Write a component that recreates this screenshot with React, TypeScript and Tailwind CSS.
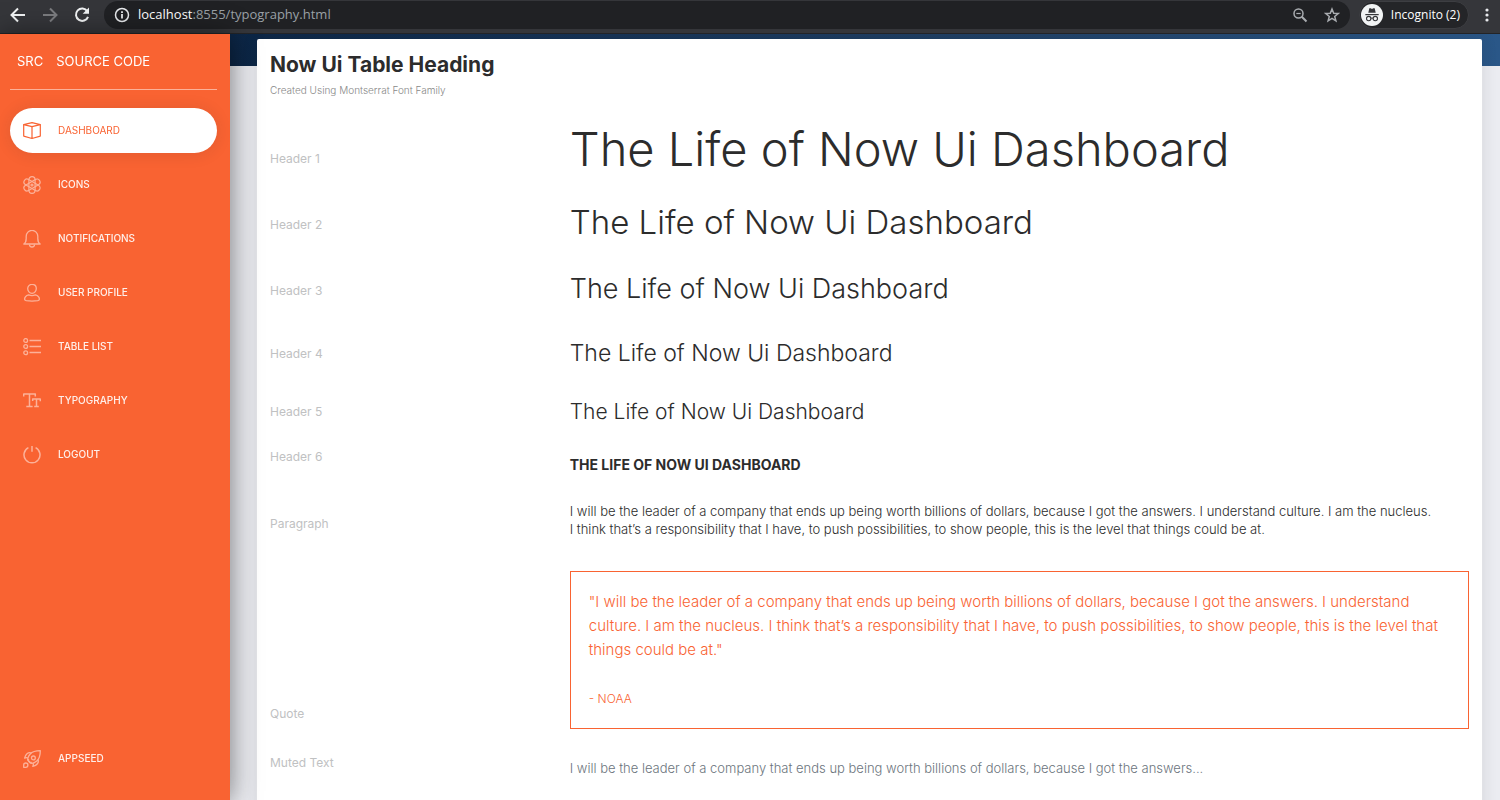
import type { ReactNode } from "react";

type NavItem = { label: string; icon: ReactNode };

const stroke = {
  viewBox: "0 0 18 18",
  fill: "none",
  stroke: "currentColor",
  strokeWidth: 1.3,
  strokeLinejoin: "round" as const,
  "aria-hidden": true,
};

const BoxIcon = (
  <svg {...stroke} strokeWidth={1.2} className="size-[18px]">
    <path d="M.7 2.600 9 4.700l8.300-2.100L9 .6Z" />
    <path d="M.7 2.600v11.500L9 16.500l8.300-2.400V2.600M9 4.700V16.500" />
  </svg>
);

const AtomIcon = (
  <svg {...stroke} strokeWidth={1.2} className="size-[18px]">
    <rect x="5.900" y=".6" width="6.200" height="16.800" rx="3.100" />
    <rect x="5.900" y=".2" width="6.200" height="17.600" rx="3.100" transform="rotate(60 9 9)" />
    <rect x="5.900" y=".2" width="6.200" height="17.600" rx="3.100" transform="rotate(120 9 9)" />
    <circle cx="9" cy="9" r="1" />
  </svg>
);

const BellIcon = (
  <svg {...stroke} className="size-[18px]">
    <path d="M.8 14c2-1.300 2.400-3 2.400-5.600V6.200a5.800 5.800 0 0 1 11.600 0v2.200c0 2.600.4 4.300 2.400 5.600Z" />
    <path d="M6.500 14.500a2.500 2.500 0 0 0 5 0" />
  </svg>
);

const UserIcon = (
  <svg {...stroke} className="size-[18px]">
    <path d="M9 .4c2.500 0 4.300 1.800 4.300 4.200S11.500 9.400 9 9.400 4.700 7 4.700 4.600 6.500.4 9 .4Z" />
    <path d="M5.600 10.900c-2.400.7-4 2.300-4 4.400 0 .9.700 1.100 1.600 1.300 3.600.6 8 .6 11.600 0 .9-.2 1.600-.4 1.600-1.300 0-2.100-1.600-3.700-4-4.400-2 .9-4.800.9-6.800 0Z" />
  </svg>
);

const ListIcon = (
  <svg {...stroke} className="size-[18px]">
    <circle cx="2.700" cy="2.500" r="1.900" />
    <circle cx="2.700" cy="8.500" r="1.900" />
    <circle cx="2.700" cy="14.800" r="1.900" />
    <path d="M6.500 2.500H18M6.500 8.500H18M6.500 14.500H18" />
  </svg>
);

const TypeIcon = (
  <svg {...stroke} strokeWidth={1.500} className="size-[18px]">
    <path d="M.7 4.500V2h11.600v2.500M6.500 2V14.500M3.300 14.500h6.300" />
    <path d="M9.700 9V7h7.600v2.200M13.500 7v7.500M11.200 14.500h4.600" />
  </svg>
);

const PowerIcon = (
  <svg {...stroke} strokeWidth={1.500} className="size-[18px]">
    <path d="M9 0v5.700M5.400 1.700a8 8 0 1 0 7.200 0" />
  </svg>
);

const RocketIcon = (
  <svg {...stroke} strokeWidth={1.300} className="size-[18px]">
    <path d="M17.300.7c-4.700 0-8 1-10.300 3.500-2 2.200-2.600 4.400-2.200 6.200l2.800 2.800c1.800.4 4-.2 6.200-2.200C16.300 8.700 17.300 5.400 17.300.7Z" />
    <circle cx="10.400" cy="7.900" r="1.900" />
    <path d="M8.500 3C5.200 1.800 2.700 4 1.600 8.200c1.200-.7 2.300-.7 3.400-.1M15 9.500c1.200 3.300-1 5.800-5.200 6.900.7-1.200.7-2.300.1-3.400M5.600 9.200c-.5 2 1.200 3.700 3.200 3.200" />
    <path d="M.7 17.300v-2.200c0-1.200.9-2.100 2.100-2.100s2.100.9 2.100 2.100-.9 2.200-2.100 2.200Z" />
  </svg>
);

const NAV: NavItem[] = [
  { label: "Dashboard", icon: BoxIcon },
  { label: "Icons", icon: AtomIcon },
  { label: "Notifications", icon: BellIcon },
  { label: "User Profile", icon: UserIcon },
  { label: "Table List", icon: ListIcon },
  { label: "Typography", icon: TypeIcon },
  { label: "Logout", icon: PowerIcon },
];

function NavLink({ item, active = false }: { item: NavItem; active?: boolean }) {
  return (
    <a
      href="#"
      aria-current={active ? "page" : undefined}
      className={
        active
          ? "flex h-[45px] items-center gap-[17px] rounded-full bg-white px-[13px] text-[#f96332] shadow-[0_1px_15px_1px_rgba(39,39,39,0.1)]"
          : "flex h-[45px] items-center gap-[17px] rounded-full px-[13px] text-white"
      }
    >
      <span className={active ? "" : "opacity-50"}>{item.icon}</span>
      <span className={active ? "text-[10px] uppercase" : "text-[10px] font-medium uppercase opacity-90"}>
        {item.label}
      </span>
    </a>
  );
}

function Sidebar() {
  return (
    <aside className="relative z-10 flex w-[230px] shrink-0 flex-col bg-[#f96332] pr-[13px] pb-[19px] pl-[10px] shadow-[0_2px_22px_0_rgba(0,0,0,0.2),0_2px_30px_0_rgba(0,0,0,0.35)]">
      <div className="flex h-14 items-center gap-[13px] border-b border-white/50 px-[7px] text-[13px] text-white">
        <a href="#">SRC</a>
        <a href="#">SOURCE CODE</a>
      </div>
      <nav className="mt-[18px] flex flex-1 flex-col gap-[9px]">
        {NAV.map((item, i) => (
          <NavLink key={item.label} item={item} active={i === 0} />
        ))}
        <div className="mt-auto">
          <NavLink item={{ label: "AppSeed", icon: RocketIcon }} />
        </div>
      </nav>
    </aside>
  );
}

function BrowserBar() {
  return (
    <header className="flex h-[34px] shrink-0 items-start border-b border-[#232427] bg-[#35363a] pt-px pr-2 font-['Open_Sans','Noto_Sans',sans-serif] text-[13px]">
      <div className="flex h-7 items-center gap-[14px] pl-[9px] text-[#f1f3f4]">
        <button type="button" aria-label="Back">
          <svg viewBox="0 0 18 18" className="size-[18px]" fill="none" stroke="currentColor" strokeWidth="2">
            <path d="M16 9H3M9 2.500 2.500 9 9 15.500" />
          </svg>
        </button>
        <button type="button" aria-label="Forward" className="text-[#7b7c7f]">
          <svg viewBox="0 0 18 18" className="size-[18px]" fill="none" stroke="currentColor" strokeWidth="2">
            <path d="M2 9h13M9 2.500 15.500 9 9 15.500" />
          </svg>
        </button>
        <button type="button" aria-label="Reload">
          <svg viewBox="0 0 18 18" className="size-[18px]" fill="none" stroke="currentColor" strokeWidth="2">
            <path d="M14.300 5.200A6.200 6.200 0 1 0 15 10.800" />
            <path d="M16 1.500V7.800H9.700Z" fill="currentColor" stroke="none" />
          </svg>
        </button>
      </div>
      <div className="ml-[13px] flex h-7 flex-1 items-center rounded-full bg-[#202124] px-[10px]">
        <svg viewBox="0 0 16 16" className="mr-2 size-4 text-[#e8eaed]" fill="none" stroke="currentColor" strokeWidth="1.500" aria-hidden="true">
          <circle cx="8" cy="8" r="6.500" />
          <path d="M8 7v4.500" strokeWidth="1.800" />
          <path d="M8 4.200v1.700" strokeWidth="1.800" />
        </svg>
        <span className="text-[#9aa0a6]">
          <span className="text-white">localhost</span>:8555/typography.html
        </span>
        <div className="ml-auto flex items-center gap-4 text-[#a9acb0]">
          <button type="button" aria-label="Zoom">
            <svg viewBox="0 0 16 16" className="size-4" fill="none" stroke="currentColor" strokeWidth="1.500">
              <circle cx="6.500" cy="6.500" r="4.500" />
              <path d="M4.300 6.500h4.400" strokeWidth="1.200" />
              <path d="m9.800 9.800 4.700 4.700" strokeWidth="2" />
            </svg>
          </button>
          <button type="button" aria-label="Bookmark this page">
            <svg viewBox="0 0 16 16" className="size-4" fill="none" stroke="currentColor" strokeWidth="1.500">
              <path d="m8 2 1.700 4.200 4.500.3-3.500 2.900 1.200 4.400L8 11.400l-3.900 2.400 1.200-4.400-3.500-2.900 4.500-.3Z" />
            </svg>
          </button>
        </div>
      </div>
      <button type="button" className="ml-[9px] flex h-7 items-center gap-2 rounded-full border border-[#3d3e42] bg-[#242528] pr-2 pl-px text-[12px] text-white">
        <svg viewBox="0 0 22 22" className="size-[22px]" aria-hidden="true">
          <circle cx="11" cy="11" r="11" fill="#f1f3f4" />
          <path d="M7.300 8.800 8.300 4.300h1.400l1.300.6 1.300-.6h1.400l1 4.500Z" fill="#35363a" />
          <path d="M4.300 10.600h13.400" stroke="#35363a" strokeWidth="1.200" />
          <g fill="none" stroke="#35363a" strokeWidth="1.100">
            <circle cx="7.700" cy="14.600" r="2.200" />
            <circle cx="14.300" cy="14.600" r="2.200" />
            <path d="M9.900 14.400q1.100-.8 2.200 0" />
          </g>
        </svg>
        Incognito (2)
      </button>
      <button type="button" aria-label="Menu" className="ml-[13px] flex h-7 items-center text-[#e8eaed]">
        <svg viewBox="0 0 10 16" className="h-4 w-[10px]" fill="currentColor">
          <circle cx="5" cy="3" r="1.600" />
          <circle cx="5" cy="8" r="1.600" />
          <circle cx="5" cy="13" r="1.600" />
        </svg>
      </button>
    </header>
  );
}

function Row({ label, className = "", children }: { label: string; className?: string; children: ReactNode }) {
  return (
    <div className={`grid grid-cols-[1fr_3fr] items-end ${className}`}>
      <span className="mb-2 text-[12px] leading-5 text-[#c0c1c2]">{label}</span>
      <div>{children}</div>
    </div>
  );
}

const TITLE = "The Life of Now Ui Dashboard";

export default function App() {
  return (
    <div className="flex h-screen flex-col font-['Inter','Open_Sans',sans-serif] text-[#2c2c2c]">
      <BrowserBar />
      <div className="flex min-h-0 flex-1">
        <Sidebar />
        <main className="min-w-0 flex-1 overflow-y-auto bg-[#ebecf1] [scrollbar-width:none]">
          <div className="h-8 bg-linear-to-r from-[#0c2646] via-[#204065] via-60% to-[#2a5788]" />
          <section className="-mt-[27px] mr-[18px] mb-5 ml-[27px] rounded-[2px] bg-white px-[13px] pt-[13px] pb-10 shadow-[0_1px_15px_1px_rgba(39,39,39,0.1)]">
            <h5 className="text-[21px] leading-[26px] font-bold">Now Ui Table Heading</h5>
            <p className="mt-1 text-[10px] leading-4 font-light text-[#888]">Created Using Montserrat Font Family</p>
            <Row label="Header 1" className="mt-[23px]">
              <h1 className="text-[47px] leading-14 font-light">{TITLE}</h1>
            </Row>
            <Row label="Header 2" className="mt-[25px]">
              <h2 className="text-[33px] leading-[41px] font-light">{TITLE}</h2>
            </Row>
            <Row label="Header 3" className="mt-[25px]">
              <h3 className="text-[27px] leading-[41px] font-light">{TITLE}</h3>
            </Row>
            <Row label="Header 4" className="mt-[25px]">
              <h4 className="text-[23px] leading-[38px] font-light">{TITLE}</h4>
            </Row>
            <Row label="Header 5" className="mt-[22px]">
              <h5 className="text-[21px] leading-9 font-light">{TITLE}</h5>
            </Row>
            <Row label="Header 6" className="mt-[17px]">
              <h6 className="text-[14px] leading-5 font-bold uppercase">{TITLE}</h6>
            </Row>
            <Row label="Paragraph" className="mt-[27px]">
              <p className="pb-1 text-[13px] leading-[18px] font-light">
                I will be the leader of a company that ends up being worth billions of dollars, because I got the
                answers. I understand culture. I am the nucleus.
                <br />I think that’s a responsibility that I have, to push possibilities, to show people, this is the
                level that things could be at.
              </p>
            </Row>
            <Row label="Quote" className="mt-[29px]">
              <blockquote className="mb-[3px] border border-[#f96332] px-[18px] pt-[18px] pb-5 text-[#f96332]">
                <p className="text-[15px] leading-6 font-light">
                  "I will be the leader of a company that ends up being worth billions of dollars, because I got the
                  answers. I understand culture. I am the nucleus. I think that’s a responsibility that I have, to
                  push possibilities, to show people, this is the level that things could be at."
                </p>
                <small className="mt-7 block text-[12px] leading-[18px] font-light">- NOAA</small>
              </blockquote>
            </Row>
            <Row label="Muted Text" className="mt-[21px]">
              <p className="pb-1 text-[13px] leading-[18px] font-light text-[#6c757d]">
                I will be the leader of a company that ends up being worth billions of dollars, because I got the
                answers...
              </p>
            </Row>
          </section>
        </main>
      </div>
    </div>
  );
}
